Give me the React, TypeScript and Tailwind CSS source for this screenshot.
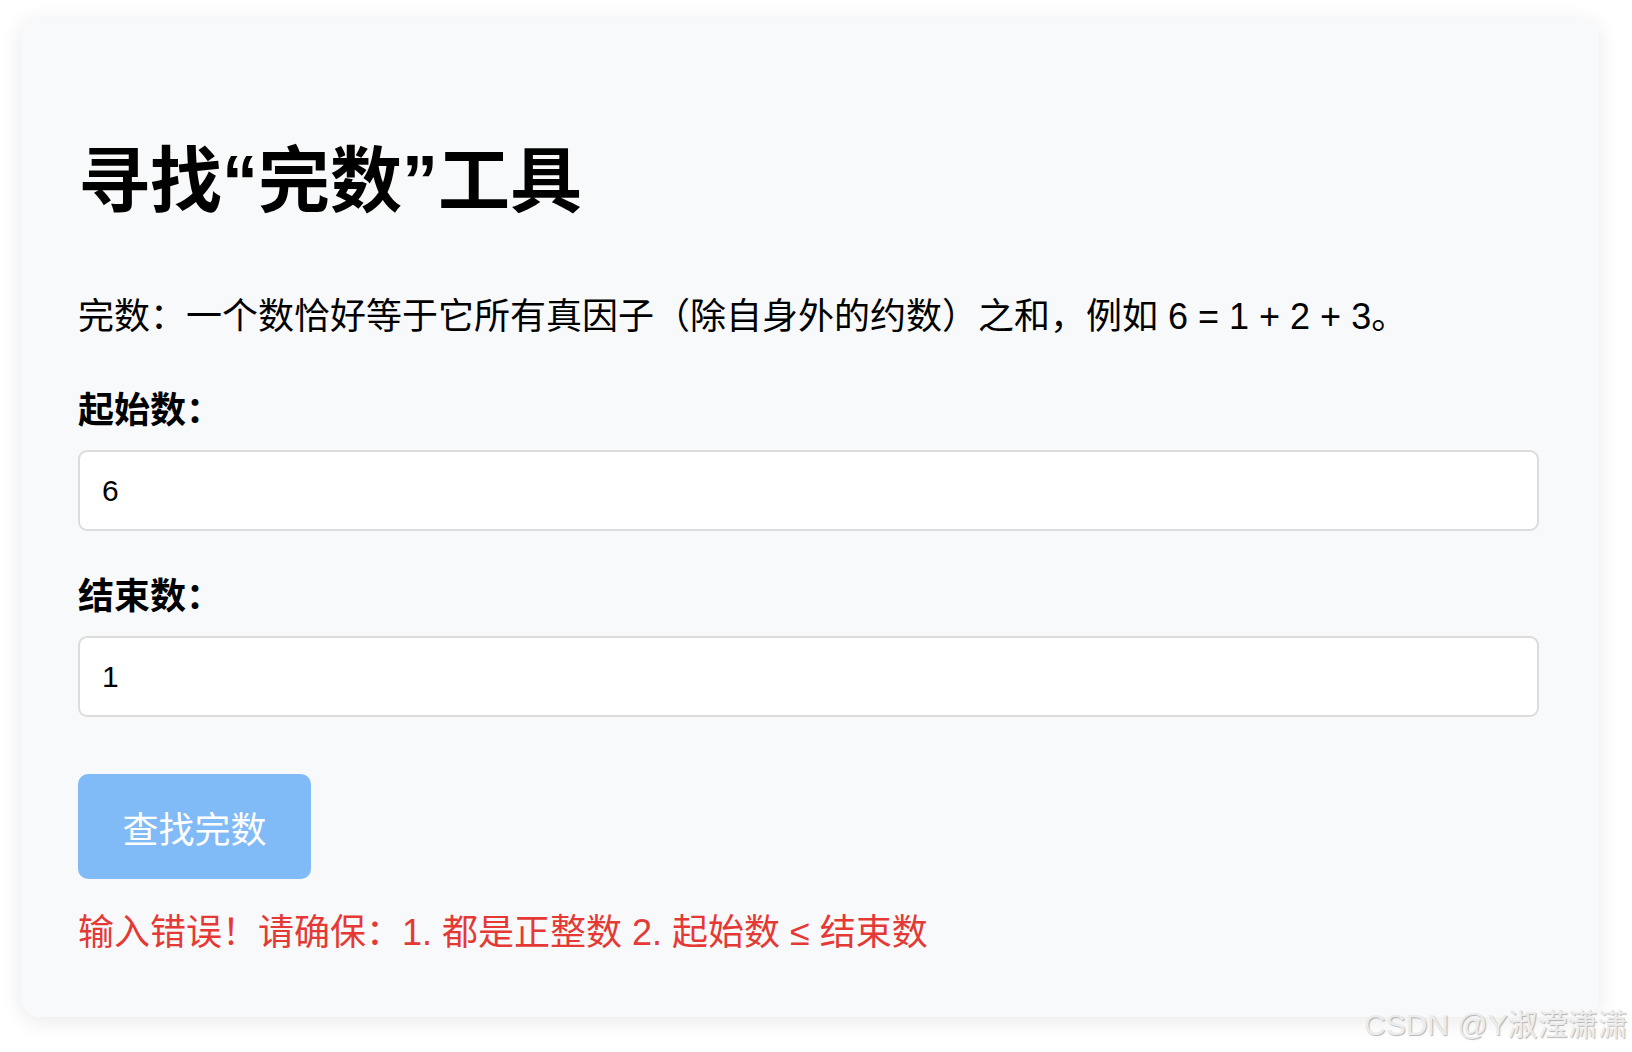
import React from "react";

const FONT = '"Liberation Sans", "Noto Sans CJK SC", sans-serif';

export default function App() {
  return (
    <div
      className="relative w-[1632px] h-[1052px] overflow-hidden bg-white text-black"
      style={{ fontFamily: FONT }}
    >
      <div className="ml-[21px] mt-[18px] w-[1578px] h-[999px] rounded-[18px] bg-[#f8f9fa] shadow-[0_4px_22px_rgba(0,0,0,0.09)] pl-[57px] pr-[60px] pt-[56px]">
        <h1 className="mt-[55px] text-[72px] leading-[104px] font-bold">
          寻找“完数”工具
        </h1>
        <p className="mt-[58px] text-[36px] leading-[52px]">
          完数：一个数恰好等于它所有真因子（除自身外的约数）之和，例如 6 = 1 + 2 + 3。
        </p>
        <label className="block mt-[42px] text-[36px] leading-[52px] font-bold">
          起始数：
        </label>
        <input
          type="text"
          defaultValue="6"
          className="block mt-[13px] w-full h-[81px] rounded-[9px] border-2 border-[#dcdcdc] bg-white px-[22px] text-[30px] text-black outline-none"
        />
        <label className="block mt-[40px] text-[36px] leading-[52px] font-bold">
          结束数：
        </label>
        <input
          type="text"
          defaultValue="1"
          className="block mt-[13px] w-full h-[81px] rounded-[9px] border-2 border-[#dcdcdc] bg-white px-[22px] text-[30px] text-black outline-none"
        />
        <button
          type="button"
          className="mt-[57px] flex items-center justify-center w-[233px] h-[105px] pt-[9px] rounded-[10px] bg-[#80bbf7] text-white text-[36px] leading-[52px]"
        >
          查找完数
        </button>
        <div className="mt-[28px] text-[36px] leading-[52px] text-[#e53935]">
          输入错误！请确保：1. 都是正整数 2. 起始数 ≤ 结束数
        </div>
      </div>
      <div className="absolute left-[1364px] top-[1010px] whitespace-nowrap text-[30px] leading-[30px] text-[#ececec] [text-shadow:1px_1px_1px_rgba(0,0,0,0.28)]">
        CSDN @Y淑滢潇潇
      </div>
    </div>
  );
}
